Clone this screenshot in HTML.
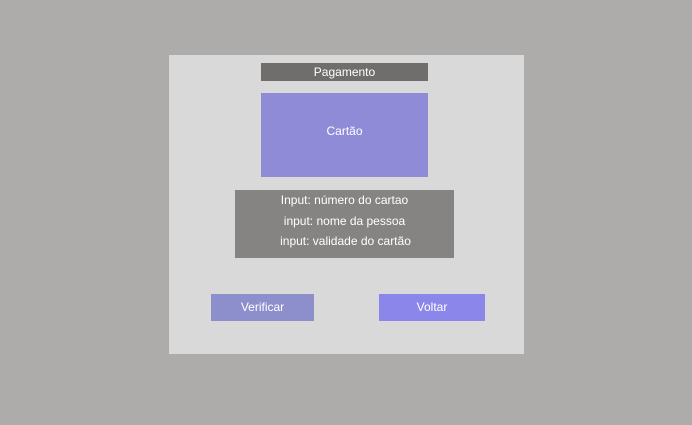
<!DOCTYPE html>
<html><head><style>
body{margin:0;width:692px;height:425px;background:#adacaa;font-family:"Liberation Sans",sans-serif;position:relative;overflow:hidden}
div{position:absolute;color:#fff;font-size:12px;text-align:center}
</style></head><body>
<div style="left:169px;top:55px;width:355px;height:299px;background:#d9d9d9"></div>
<div style="left:261px;top:63px;width:167px;height:18px;background:#6f6e6c;line-height:18px">Pagamento</div>
<div style="left:261px;top:93px;width:167px;height:84px;background:#908bd7;line-height:76px">Cartão</div>
<div style="left:235px;top:190px;width:219px;height:68px;background:#858482;line-height:20.5px">
<div style="position:static">Input: número do cartao</div>
<div style="position:static">input: nome da pessoa</div>
<div style="position:static;padding-left:2px">input: validade do cartão</div></div>
<div style="left:211px;top:294px;width:103px;height:27px;background:#8d8ecc;line-height:27px">Verificar</div>
<div style="left:379px;top:294px;width:106px;height:27px;background:#8b87ea;line-height:27px">Voltar</div>
</body></html>
